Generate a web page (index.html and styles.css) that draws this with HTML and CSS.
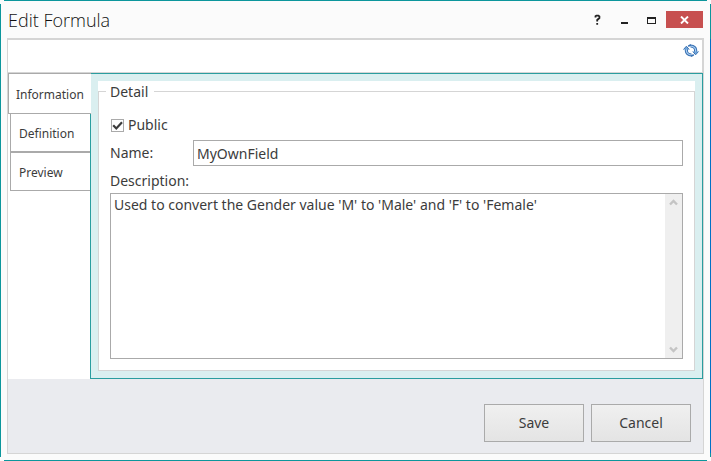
FILE: index.html
```html
<!DOCTYPE html>
<html lang="en">
<head>
<meta charset="utf-8">
<title>Edit Formula</title>
<link rel="stylesheet" href="styles.css">
</head>
<body>
<div class="window">
  <header class="titlebar">
    <h1 class="title">Edit Formula</h1>
    <div class="controls">
      <button class="control" type="button" aria-label="Help"><svg width="9" height="12" viewBox="0 0 9 12"><path d="M2.5 3.4V2.2L3.4 1.6H5.4L6.4 2.5V4L4.2 6V7.6M4.2 9V10.8" fill="none" stroke="#222" stroke-width="1.8"/></svg></button>
      <button class="control" type="button" aria-label="Minimize"><svg width="9" height="12" viewBox="0 0 9 12"><path d="M1 8h7v2H1z" fill="#222"/></svg></button>
      <button class="control" type="button" aria-label="Maximize"><svg width="9" height="12" viewBox="0 0 9 12"><path d="M0 3h9v7H0zM1 5v4h7V5z" fill="#222" fill-rule="evenodd"/></svg></button>
      <button class="control close" type="button" aria-label="Close"><svg width="9" height="8" viewBox="0 0 9 8"><path d="M1 .5l7 7M8 .5l-7 7" stroke="#fff" stroke-width="1.9"/></svg></button>
    </div>
  </header>
  <main class="panel">
    <div class="toolbar">
      <button class="refresh" type="button" aria-label="Refresh"><svg width="16" height="13" viewBox="0 0 16 13"><g fill="none" stroke="#3a72b4" stroke-width="3.2"><path d="M3.4 5V7Q3.6 10.6 8.4 11"/><path d="M12.6 8V6Q12.4 2.4 7.6 2"/></g><g fill="none" stroke="#a9cdf0" stroke-width="1.2"><path d="M3.4 4V7Q3.8 10.4 8.4 11"/><path d="M12.6 9V6Q12.2 2.6 7.6 2"/></g><path d="M.5 5.5L3.4 2.2 6.2 5.5M9.8 7.5L12.6 10.8 15.5 7.5" fill="#6fa3d8" stroke="#3a72b4"/><path d="M5.2 2.2L8 .8M10.8 10.8L8 12.2" stroke="#3a72b4" stroke-width="1.6"/></svg></button>
    </div>
    <div class="workspace">
      <nav class="tabs">
        <a class="tab active" href="#information">Information</a>
        <a class="tab" href="#definition">Definition</a>
        <a class="tab" href="#preview">Preview</a>
      </nav>
      <section class="content" id="information">
        <div class="sheet">
          <fieldset class="detail">
            <legend>Detail</legend>
            <label class="public"><span class="checkwrap"><input class="check" type="checkbox" checked><svg class="tick" width="13" height="13" viewBox="0 0 13 13"><path d="M2.2 6.2L5.3 9.4 11 3.2" fill="none" stroke="#3c3c3c" stroke-width="2.2"/></svg></span>Public</label>
            <div class="row"><label class="name-label" for="name">Name:</label><input class="name" id="name" type="text" value="MyOwnField"></div>
            <label class="desc-label" for="description">Description:</label>
            <div class="memo">
              <textarea class="description" id="description">Used to convert the Gender value 'M' to 'Male' and 'F' to 'Female'</textarea>
              <div class="scroll" aria-hidden="true"><svg width="9" height="7" viewBox="0 0 9 7"><path d="M1 5.5L4.5 2 8 5.5" fill="none" stroke="#c4c4c4" stroke-width="2.4"/></svg><svg width="9" height="7" viewBox="0 0 9 7"><path d="M1 1.5L4.5 5 8 1.5" fill="none" stroke="#c4c4c4" stroke-width="2.4"/></svg></div>
            </div>
          </fieldset>
        </div>
      </section>
    </div>
    <footer class="actions">
      <button class="action" type="button">Save</button>
      <button class="action" type="button">Cancel</button>
    </footer>
  </main>
</div>
</body>
</html>
```
FILE: styles.css
```css
* { box-sizing: border-box; }

body {
  margin: 0;
  color: #3c3c3c;
  font: 14px/20px "Noto Sans", "Open Sans", sans-serif;
}

button, input, textarea { font: inherit; color: inherit; margin: 0; }
svg { display: block; }

.window {
  display: flex;
  flex-direction: column;
  min-height: 100vh;
  padding: 1px 7px 7px;
  background:
    linear-gradient(#0c969c, #0c969c) 4px 0 / calc(100% - 8px) 1px no-repeat,
    linear-gradient(#0c969c, #0c969c) 4px 100% / calc(100% - 8px) 1px no-repeat,
    linear-gradient(#0c969c, #0c969c) 0 4px / 1px calc(100% - 8px) no-repeat,
    linear-gradient(#0072c6, #0072c6) 100% 39px / 1px calc(100% - 47px) no-repeat,
    linear-gradient(#0c969c, #0c969c) 100% 4px / 1px calc(100% - 8px) no-repeat,
    #fbfbfb;
}

.titlebar { display: flex; justify-content: space-between; height: 37px; }
.title { margin: 0; padding: 6px 0 0 1px; color: #111; font-family: "Open Sans", "Noto Sans", sans-serif; font-size: 18px; line-height: 26px; font-weight: 300; }
.controls { display: flex; padding: 10px 1px 0 0; }
.control { display: grid; place-items: center; width: 27px; height: 17px; padding: 0; border: 0; background: none; }
.close { width: 37px; margin-left: 1px; background: #c75050; }

.panel {
  display: flex;
  flex: 1;
  flex-direction: column;
  border: 1px solid #d5d5d5;
  border-top-width: 2px;
  background: #eaebef;
}

.toolbar {
  display: flex;
  justify-content: flex-end;
  height: 33px;
  padding: 4px 3px 0 0;
  border: solid #d5d5d5;
  border-width: 0 1px 1px 0;
  background: #fff;
}
.refresh { width: 16px; height: 13px; padding: 0; border: 0; background: none; }

.workspace { display: flex; flex: 1; background: #fff; }
.tabs { width: 82px; font-size: 12px; }
.tab {
  display: block;
  height: 39px;
  margin: 0 0 0 2px;
  padding: 10px 8px 8px;
  border: 1px solid #aaa;
  border-right: 0;
  color: inherit;
  text-decoration: none;
}
.tab.active {
  position: relative;
  height: 41px;
  margin: 0 -1px -1px 0;
  padding: 11px 7px;
  background: #fff;
}

.content { display: flex; flex: 1; padding: 7px; border: 1px solid #2a9d9f; background: #daeff0; }
.sheet { display: flex; flex: 1; background: #fff; }

.detail {
  display: flex;
  flex: 1;
  flex-direction: column;
  min-width: 0;
  margin: 0;
  padding: 11px 11px 11px;
  border: 1px solid #d5d5d5;
}
.detail legend { margin-left: -4px; padding: 1px 6px 0 4px; }
.public { display: flex; align-items: center; gap: 4px; height: 24px; }
.checkwrap { position: relative; margin-left: 1px; }
.check { display: block; appearance: none; width: 13px; height: 13px; border: 1px solid #aaa; background: #fff; }
.tick { position: absolute; inset: 0; pointer-events: none; }
.row { display: flex; align-items: center; margin-top: 3px; }
.name-label { width: 83px; }
.name { flex: 1; min-width: 0; height: 26px; padding: 0 3px; border: 1px solid #aaa; background: #fff; }
.desc-label { padding: 5px 0 2px; }
.memo { display: flex; flex: 1; border: 1px solid #aaa; }
.description { flex: 1; min-width: 0; padding: 1px 3px; border: 0; background: #fff; resize: none; overflow: hidden; }
.scroll { display: flex; flex-direction: column; justify-content: space-between; align-items: center; width: 17px; padding: 5px 0; background: #efefef; }

.actions { display: flex; justify-content: flex-end; gap: 7px; padding: 25px 12px 11px; }
.action { width: 100px; height: 38px; padding: 0; border: 1px solid #aaa; background: linear-gradient(#f0f0f0, #e4e4e4); }
```
